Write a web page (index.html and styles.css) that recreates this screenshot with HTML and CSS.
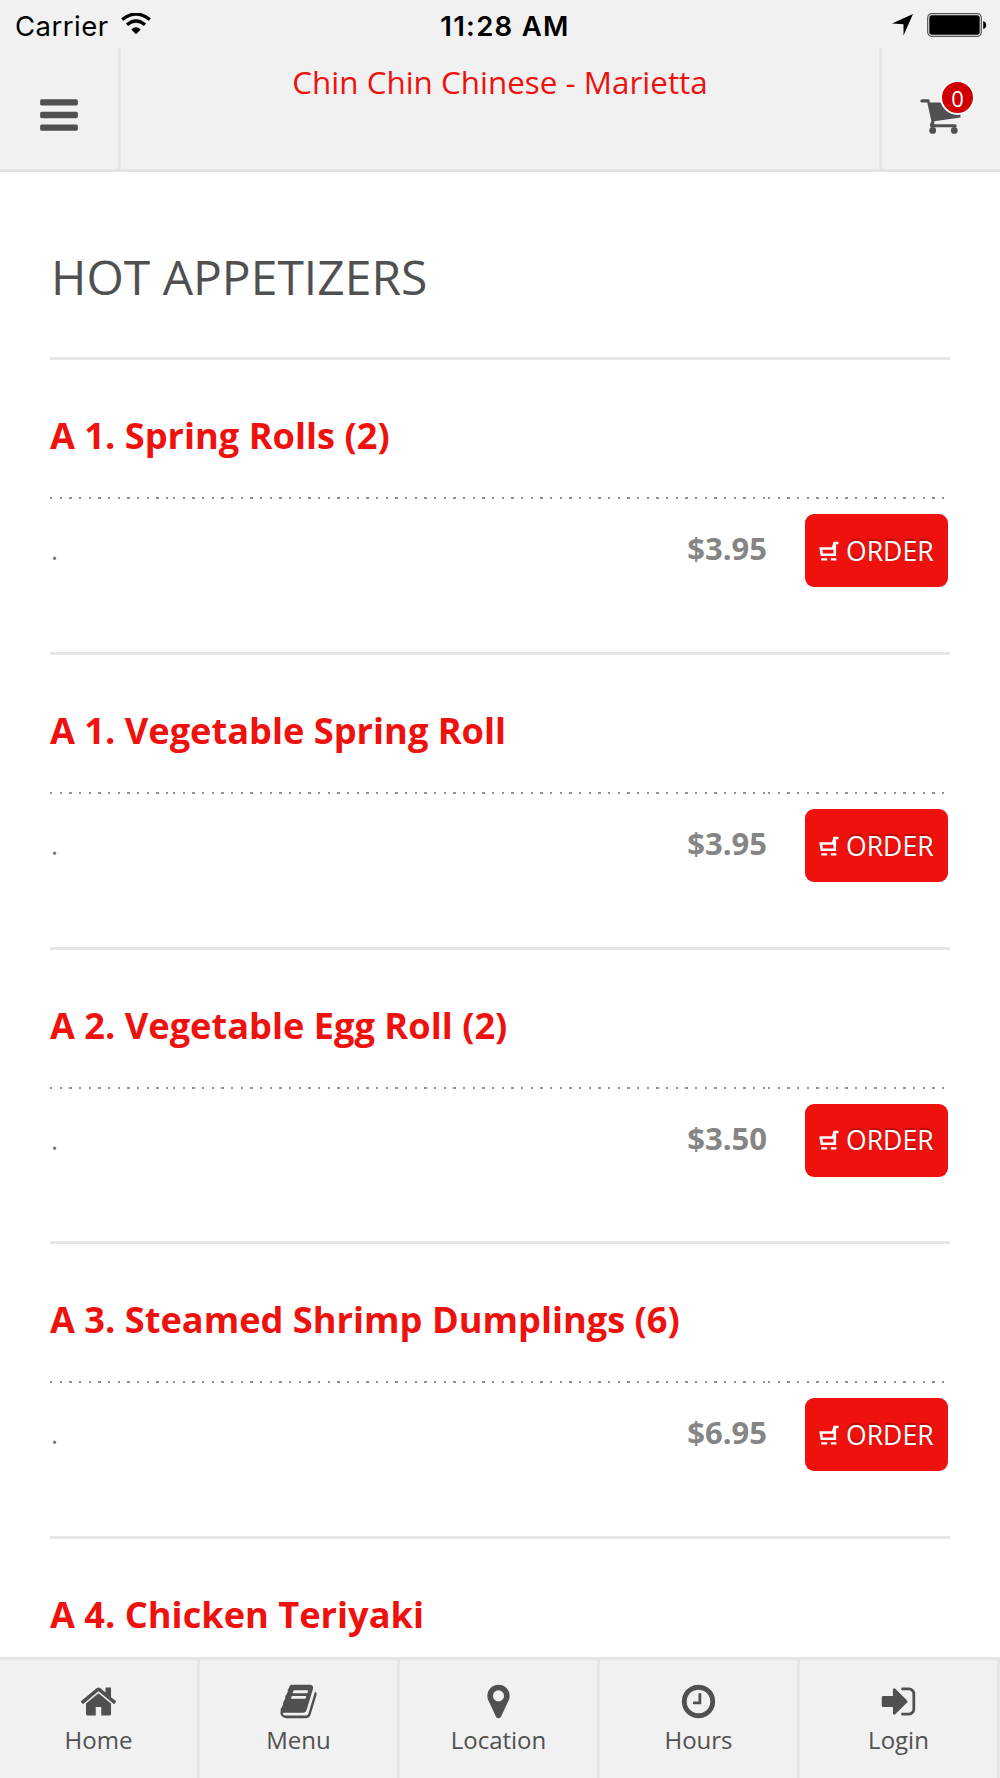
FILE: index.html
```html
<!DOCTYPE html>
<html lang="en">
<head>
  <meta charset="UTF-8" />
  <meta name="viewport" content="width=device-width, initial-scale=1" />
  <title>Chin Chin Chinese - Marietta</title>
  <link rel="stylesheet" href="styles.css">
</head>
<body>

<!-- Icons -->
<svg class="sprite" xmlns="http://www.w3.org/2000/svg">
  <symbol id="bars" viewBox="0 0 1792 1792"><path d="M1664 1344v128q0 26-19 45t-45 19h-1408q-26 0-45-19t-19-45v-128q0-26 19-45t45-19h1408q26 0 45 19t19 45zm0-512v128q0 26-19 45t-45 19h-1408q-26 0-45-19t-19-45v-128q0-26 19-45t45-19h1408q26 0 45 19t19 45zm0-512v128q0 26-19 45t-45 19h-1408q-26 0-45-19t-19-45v-128q0-26 19-45t45-19h1408q26 0 45 19t19 45z"/></symbol>
  <symbol id="cart" viewBox="0 0 44 44">
    <path d="M3 6.200h7.200l.7 3.200H41.500V24.500L15.300 28.200v3h20.900q1.500 0 1.500 1.500t-1.500 1.500H12.500q-2 0-1.500-2.600l1.400-3.400L8.300 9.500H3q-1.700 0-1.700-1.600T3 6.200z"/>
    <circle cx="13.700" cy="37.400" r="3.400"/>
    <circle cx="35.300" cy="37.400" r="3.400"/>
  </symbol>
  <symbol id="home" viewBox="0 0 1792 1792"><path d="M1472 992v480q0 26-19 45t-45 19h-384v-384h-256v384h-384q-26 0-45-19t-19-45v-480q0-1 .5-3t.5-3l575-474 575 474q1 2 1 6zm223-69l-62 74q-8 9-21 11h-3q-13 0-21-7l-692-577-692 577q-12 8-24 7-13-2-21-11l-62-74q-8-10-7-23.5t11-21.5l719-599q32-26 76-26t76 26l244 204v-195q0-14 9-23t23-9h192q14 0 23 9t9 23v408l219 182q10 8 11 21.5t-7 23.5z"/></symbol>
  <symbol id="book" viewBox="0 0 1792 1792"><path d="M1703 478q40 57 18 129l-275 906q-19 64-76.5 107.5t-122.5 43.5h-923q-77 0-148.5-53.5t-99.5-131.5q-24-67-2-127 0-4 3-27t4-37q1-8-3-21.5t-3-19.5q2-11 8-21t16.5-23.5 16.5-23.5q23-38 45-91.5t30-91.5q3-10 .5-30t-.5-28q3-11 17-28t17-23q21-36 42-92t25-90q1-9-2.5-32t.5-28q4-13 22-30.5t22-22.5q19-26 42.5-84.5t27.5-96.5q1-8-3-25.5t-2-26.5q2-8 9-18t18-23 17-21q8-12 16.5-30.5t15-35 16-36 19.5-32 26.5-23.5 36-11.5 47.5 5.5l-1 3q38-9 51-9h761q74 0 114 56t18 130l-274 906q-36 119-71.5 153.5t-128.5 34.5h-869q-27 0-38 15-11 16-1 43 24 70 144 70h923q29 0 56-15.5t35-41.5l300-987q7-22 5-57 38 15 59 43zm-1064 2q-4 13 2 22.5t20 9.5h608q13 0 25.5-9.5t16.5-22.5l21-64q4-13-2-22.5t-20-9.5h-608q-13 0-25.5 9.5t-16.5 22.5zm-83 256q-4 13 2 22.5t20 9.5h608q13 0 25.5-9.5t16.5-22.5l21-64q4-13-2-22.5t-20-9.5h-608q-13 0-25.5 9.5t-16.5 22.5z"/></symbol>
  <symbol id="marker" viewBox="0 0 1792 1792"><path d="M1152 640q0-106-75-181t-181-75-181 75-75 181 75 181 181 75 181-75 75-181zm256 0q0 109-33 179l-364 774q-16 33-47.5 52t-67.5 19-67.5-19-46.5-52l-365-774q-33-70-33-179 0-212 150-362t362-150 362 150 150 362z"/></symbol>
  <symbol id="clock" viewBox="0 0 1792 1792"><path d="M1024 544v448q0 14-9 23t-23 9h-320q-14 0-23-9t-9-23v-64q0-14 9-23t23-9h224v-352q0-14 9-23t23-9h64q14 0 23 9t9 23zm416 352q0-148-73-273t-198-198-273-73-273 73-198 198-73 273 73 273 198 198 273 73 273-73 198-198 73-273zm224 0q0 209-103 385.5t-279.5 279.5-385.5 103-385.5-103-279.5-279.5-103-385.5 103-385.5 279.5-279.5 385.5-103 385.5 103 279.5 279.5 103 385.5z"/></symbol>
  <symbol id="login" viewBox="0 0 1792 1792"><path d="M1312 896q0 26-19 45l-544 544q-19 19-45 19t-45-19-19-45v-288h-448q-26 0-45-19t-19-45v-384q0-26 19-45t45-19h448v-288q0-26 19-45t45-19 45 19l544 544q19 19 19 45zm352-352v704q0 119-84.5 203.5t-203.5 84.5h-320q-13 0-22.5-9.5t-9.5-22.5q0-4-1-20t-.5-26.5 3-23.5 10-19.5 20.5-6.5h320q66 0 113-47t47-113v-704q0-66-47-113t-113-47h-312l-11.5-1-11.5-3-8-5.5-7-9-2-13.5q0-4-1-20t-.5-26.5 3-23.5 10-19.5 20.5-6.5h320q119 0 203.5 84.5t84.5 203.5z"/></symbol>
  <symbol id="trolley" viewBox="0 0 20 20">
    <path d="M19.500 2h-4l-1.400 5M.5 7.500h14M1.800 7.500l1 6.300h13V2.500" fill="none" stroke="#fff" stroke-width="2.600"/>
    <path d="M2.200 17.200h6v2.400h-6zM11.800 17.200h5.600v2.400h-5.600z"/>
  </symbol>
</svg>

<div class="status-bar">
  <div class="carrier">
    <span>Carrier</span>
    <svg class="wifi" viewBox="0 0 30 22">
      <path d="M1.1 6.6Q15-4.600 28.900 6.600M6 11.800Q15 4.200 24 11.800" fill="none" stroke="#000" stroke-width="3.200"/>
      <path d="M10.300 16.400Q15 12 19.700 16.400L15 21.200z"/>
    </svg>
  </div>
  <div class="time">11:28 AM</div>
  <div class="indicators">
    <svg class="arrow" viewBox="0 0 21 22"><path d="M21 0L11.500 21.500V10.300L0 9.500z"/></svg>
    <svg class="battery" viewBox="0 0 60 24">
      <rect x=".7" y=".7" width="53.600" height="22.600" rx="4" fill="none" stroke="#555" stroke-width="1.200"/>
      <rect x="2.300" y="2.300" width="50.400" height="19.400" rx="2.500"/>
      <path d="M56.200 8q3 1 3 4t-3 4z"/>
    </svg>
  </div>
</div>

<header>
  <button class="header-btn menu-btn"><svg class="icon"><use href="#bars"/></svg></button>
  <h1>Chin Chin Chinese - Marietta</h1>
  <button class="header-btn cart-btn">
    <svg class="icon"><use href="#cart"/></svg>
    <span class="badge">0</span>
  </button>
</header>

<main>
  <h2>HOT APPETIZERS</h2>

  <section class="item">
    <h3>A 1. Spring Rolls (2)</h3>
    <div class="item-row">
      <p>.</p>
      <span class="price">$3.95</span>
      <button class="order"><svg><use href="#trolley"/></svg>ORDER</button>
    </div>
  </section>
  <section class="item">
    <h3>A 1. Vegetable Spring Roll</h3>
    <div class="item-row">
      <p>.</p>
      <span class="price">$3.95</span>
      <button class="order"><svg><use href="#trolley"/></svg>ORDER</button>
    </div>
  </section>
  <section class="item">
    <h3>A 2. Vegetable Egg Roll (2)</h3>
    <div class="item-row">
      <p>.</p>
      <span class="price">$3.50</span>
      <button class="order"><svg><use href="#trolley"/></svg>ORDER</button>
    </div>
  </section>
  <section class="item">
    <h3>A 3. Steamed Shrimp Dumplings (6)</h3>
    <div class="item-row">
      <p>.</p>
      <span class="price">$6.95</span>
      <button class="order"><svg><use href="#trolley"/></svg>ORDER</button>
    </div>
  </section>
  <section class="item">
    <h3>A 4. Chicken Teriyaki</h3>
  </section>
</main>

<nav>
  <a><svg class="icon"><use href="#home"/></svg>Home</a>
  <a><svg class="icon"><use href="#book"/></svg>Menu</a>
  <a><svg class="icon"><use href="#marker"/></svg>Location</a>
  <a><svg class="icon"><use href="#clock"/></svg>Hours</a>
  <a><svg class="icon"><use href="#login"/></svg>Login</a>
</nav>

</body>
</html>
```

FILE: styles.css
```css
* {
  box-sizing: border-box;
}

body {
  font-family: 'Open Sans', sans-serif;
  margin: 0;
  height: 1778px;
  display: flex;
  flex-direction: column;
  overflow: hidden;
  background-color: #fff;
  color: #505050;
}

h1, h2, h3, p {
  margin: 0;
}

button {
  font-family: inherit;
  border: none;
  background: none;
  padding: 0;
}

.sprite {
  display: none;
}

.icon {
  display: block;
  fill: #505050;
}

/* Status bar */
.status-bar {
  flex: none;
  height: 48px;
  padding: 0 13px 0 15px;
  display: grid;
  grid-template-columns: 1fr auto 1fr;
  background-color: #f1f1f1;
  color: #000;
  font-family: Inter, sans-serif;
  font-size: 27.5px;
  line-height: 52px;
}

.carrier {
  display: flex;
  letter-spacing: 0.5px;
}

.wifi {
  width: 30px;
  height: 22px;
  margin: 13px 0 0 12px;
}

.time {
  font-weight: 600;
  letter-spacing: 1.3px;
  margin-left: 8px;
}

.indicators {
  display: flex;
  justify-content: flex-end;
}

.arrow {
  width: 21px;
  height: 22px;
  margin: 14px 14px 0 0;
}

.battery {
  width: 60px;
  height: 24px;
  margin-top: 13px;
}

/* Header */
header {
  flex: none;
  height: 124px;
  display: flex;
  background-color: #f1f1f1;
  border-bottom: 3px solid #e4e4e4;
}

header h1 {
  flex: 1;
  text-align: center;
  font-size: 31.4px;
  font-weight: 400;
  line-height: 68px;
  color: #ee110d;
}

.header-btn {
  position: relative;
  width: 121px;
}

.header-btn .icon {
  width: 44px;
  height: 44px;
}

.menu-btn {
  border-right: 3px solid #e6e6e6;
  padding: 13px 0 0 37px;
}

.cart-btn {
  border-left: 3px solid #e6e6e6;
  padding: 13px 0 0 37px;
}

.badge {
  position: absolute;
  left: 58px;
  top: 32px;
  width: 35px;
  height: 35px;
  border: 2px solid #fff;
  border-radius: 50%;
  background-color: #d00000;
  color: #fff;
  font-size: 22px;
  line-height: 32px;
}

/* Menu list */
main {
  flex: 1;
  min-height: 0;
  overflow: hidden;
  padding: 0 50px;
}

h2 {
  height: 185.4px;
  padding: 72px 0 0 1px;
  font-size: 48px;
  font-weight: 400;
  line-height: 66px;
}

.item {
  height: 294.7px;
  border-top: 3px solid #e6e6e6;
  padding-top: 50px;
}

.item h3 {
  font-size: 36.2px;
  font-weight: 700;
  line-height: 50px;
  color: #ee110d;
}

/* dotted leader above the price row */
.item-row {
  display: flex;
  align-items: flex-start;
  margin-top: 37px;
  padding: 17px 2px 0 0;
  background-image:
    repeating-linear-gradient(90deg, #909090 0 2.4px, transparent 2.4px 9.667px),
    repeating-linear-gradient(90deg, #909090 0 2.4px, transparent 2.4px 9.667px),
    repeating-linear-gradient(90deg, #909090 0 2.4px, transparent 2.4px 9.667px);
  background-size: 122px 2px, 592px 2px, 177px 2px;
  background-position: 0 0, 123.3px 0, 717.7px 0;
  background-repeat: no-repeat;
}

.item-row p {
  flex: 1;
  padding-left: 1px;
  font-size: 27px;
  line-height: 72px;
  color: #777;
}

.price {
  margin-right: 38px;
  font-size: 31px;
  font-weight: 700;
  line-height: 68px;
  color: #858585;
}

.order {
  display: flex;
  align-items: center;
  width: 143px;
  height: 73px;
  padding-left: 14px;
  border-radius: 9px;
  background-color: #ee110d;
  color: #fff;
  font-size: 26.6px;
  text-shadow: 0 -2px 1px rgba(0, 0, 0, 0.25);
}

.order svg {
  width: 20px;
  height: 20px;
  margin-right: 7px;
  fill: #fff;
}

/* Bottom nav */
nav {
  flex: none;
  height: 121px;
  display: grid;
  grid-template-columns: repeat(5, 1fr);
  background-color: #f1f1f1;
  border-top: 3px solid #e4e4e4;
}

nav a {
  display: flex;
  flex-direction: column;
  align-items: center;
  padding-top: 21.7px;
  border-right: 3px solid #e6e6e6;
  font-size: 24px;
  line-height: 38px;
}

nav .icon {
  width: 39px;
  height: 39px;
}
```
